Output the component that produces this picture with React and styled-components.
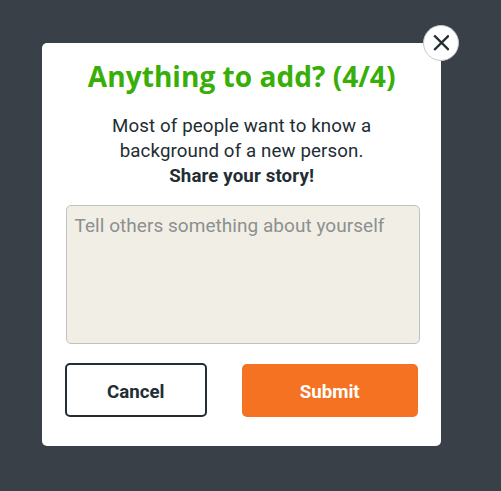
import React from "react";
import styled, { createGlobalStyle } from "styled-components";

const GlobalStyle = createGlobalStyle`
  * { box-sizing: border-box; }
  body { margin: 0; background: #394047; }
`;

const Backdrop = styled.main`
  height: 491px;
  padding: 42.5px 0 0 42px;
  overflow: hidden;
  background: #394047;
  color: #222d34;
  font-family: Roboto, sans-serif;
`;

const Dialog = styled.section`
  position: relative;
  width: 399.3px;
  height: 403.8px;
  padding: 13.6px 22.5px 0 22.5px;
  border-radius: 5px;
  background: #fff;
  display: flex;
  flex-direction: column;
`;

const CloseButton = styled.button`
  position: absolute;
  top: -18px;
  right: -18px;
  width: 36px;
  height: 36px;
  padding: 0;
  border: 1px solid #c3c6c8;
  border-radius: 50%;
  background: #fff;
  display: grid;
  place-items: center;
`;

const Title = styled.h1`
  margin: 0;
  text-align: center;
  white-space: nowrap;
  font: 700 28.1px/40px "Open Sans", sans-serif;
  color: #38ae08;
`;

const Message = styled.p`
  margin: 18px 0 0;
  text-align: center;
  font-size: 18.7px;
  line-height: 24.8px;
  letter-spacing: 0.12px;
`;

const Story = styled.textarea`
  flex: none;
  width: 353.5px;
  height: 139px;
  margin: 16.5px 0 0 1.5px;
  padding: 8px 7.5px;
  border: 1px solid #c0c2bf;
  border-radius: 5px;
  resize: none;
  outline: none;
  background: #f1eee6;
  font: 400 19px/23px Roboto, sans-serif;
  letter-spacing: 0.04px;
  &::placeholder { color: #8c908f; opacity: 1; }
`;

const Actions = styled.div`
  display: flex;
  align-items: center;
  justify-content: space-between;
  margin-top: 19px;
  padding-right: 1px;
`;

const Button = styled.button`
  width: ${(p) => (p.$primary ? "176.2px" : "142.5px")};
  height: ${(p) => (p.$primary ? "53px" : "54.5px")};
  padding: 3px 0 0;
  border: ${(p) => (p.$primary ? "0" : "2px solid #222d34")};
  border-radius: 5px;
  background: ${(p) => (p.$primary ? "#f57222" : "#fff")};
  color: ${(p) => (p.$primary ? "#fff" : "#222d34")};
  font: 700 18.7px/24px Roboto, sans-serif;
`;

export default function App() {
  return (
    <Backdrop>
      <GlobalStyle />
      <Dialog role="dialog" aria-label="Anything to add?">
        <CloseButton aria-label="Close">
          <svg width="16" height="16" viewBox="0 0 16 16" fill="none" stroke="#222d34" strokeWidth="2.4">
            <path d="M1.2 .5 15.8 15M15.8 .5 1.2 15" />
          </svg>
        </CloseButton>
        <Title>Anything to add? (4/4)</Title>
        <Message>
          Most of people want to know a<br />
          background of a new person.<br />
          <strong>Share your story!</strong>
        </Message>
        <Story placeholder="Tell others something about yourself" />
        <Actions>
          <Button>Cancel</Button>
          <Button $primary>Submit</Button>
        </Actions>
      </Dialog>
    </Backdrop>
  );
}
